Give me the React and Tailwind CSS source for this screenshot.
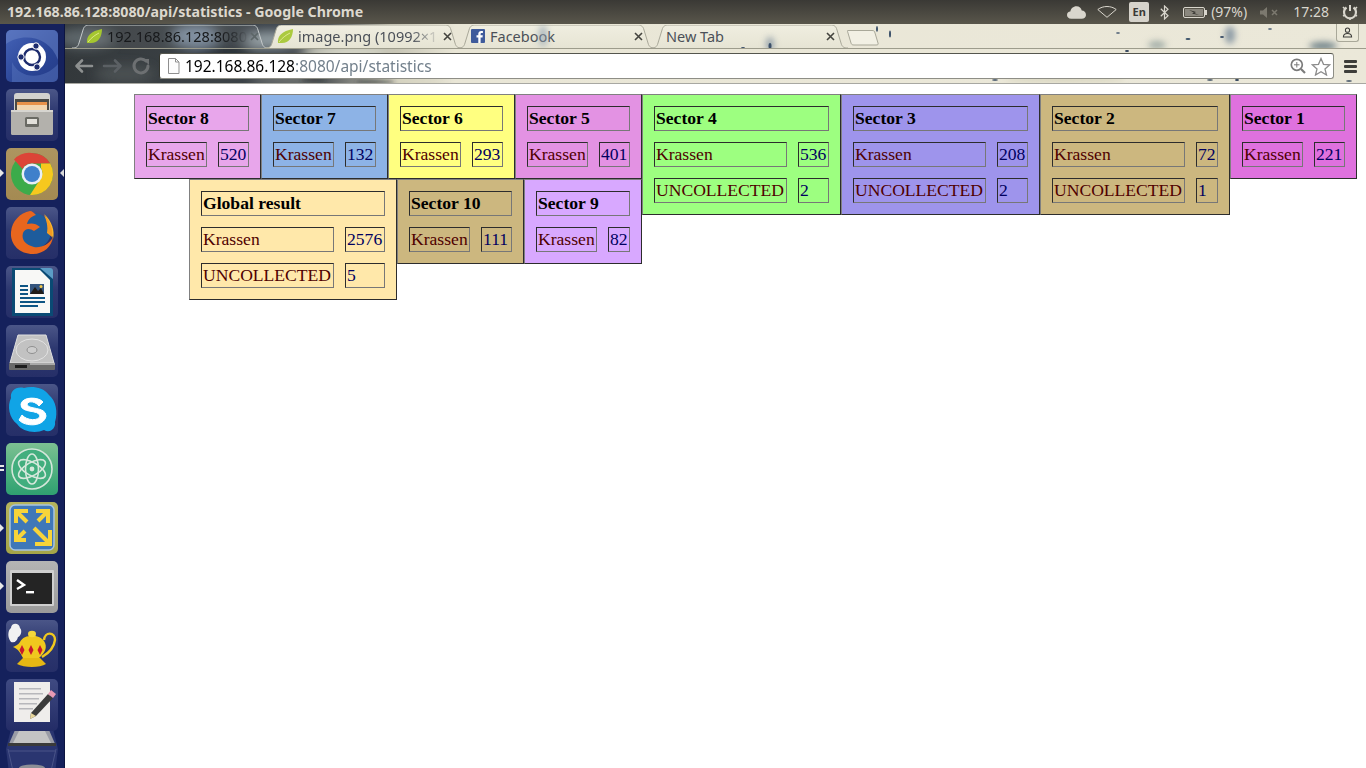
import React from "react";

const ui = { fontFamily: '"Noto Sans", "Open Sans", sans-serif' };

const tables = [
  { t: "Sector 1", bg: "bg-[#df71de]", num: "w-[31px]", name: "w-[61px]", rows: [["Krassen", "221"]] },
  { t: "Sector 2", bg: "bg-[#ccb77f]", num: "w-[22px]", name: "w-[133px]", rows: [["Krassen", "72"], ["UNCOLLECTED", "1"]] },
  { t: "Sector 3", bg: "bg-[#9e94ec]", num: "w-[31px]", name: "w-[133px]", rows: [["Krassen", "208"], ["UNCOLLECTED", "2"]] },
  { t: "Sector 4", bg: "bg-[#9dff80]", num: "w-[31px]", name: "w-[133px]", rows: [["Krassen", "536"], ["UNCOLLECTED", "2"]] },
  { t: "Sector 5", bg: "bg-[#e392e3]", num: "w-[31px]", name: "w-[61px]", rows: [["Krassen", "401"]] },
  { t: "Sector 6", bg: "bg-[#ffff80]", num: "w-[31px]", name: "w-[61px]", rows: [["Krassen", "293"]] },
  { t: "Sector 7", bg: "bg-[#8db3e6]", num: "w-[31px]", name: "w-[61px]", rows: [["Krassen", "132"]] },
  { t: "Sector 8", bg: "bg-[#e8a6eb]", num: "w-[31px]", name: "w-[61px]", rows: [["Krassen", "520"]] },
  { t: "Sector 9", bg: "bg-[#d8a8ff]", num: "w-[22px]", name: "w-[61px]", rows: [["Krassen", "82"]] },
  { t: "Sector 10", bg: "bg-[#ccb77f]", num: "w-[31px]", name: "w-[61px]", rows: [["Krassen", "111"]] },
  { t: "Global result", bg: "bg-[#ffe8aa]", num: "w-[40px]", name: "w-[133px]", rows: [["Krassen", "2576"], ["UNCOLLECTED", "5"]] },
];

const cell =
  "h-[25px] border border-solid border-t-[#2c2c2c] border-l-[#2c2c2c] border-b-[#777777] border-r-[#777777] p-[1px] align-middle leading-[21px] whitespace-nowrap";

function Stat({ d }) {
  return (
    <table
      className={`float-right border-separate border-spacing-[11px] border border-solid border-t-[#808080] border-l-[#808080] border-b-[#2c2c2c] border-r-[#2c2c2c] text-[17.6px] ${d.bg}`}
      style={{ fontFamily: '"Liberation Serif", serif' }}
    >
      <tbody>
        <tr>
          <th colSpan={2} className={`${cell} text-left font-bold text-black`}>{d.t}</th>
        </tr>
        {d.rows.map(([a, b]) => (
          <tr key={a}>
            <td className={`${cell} ${d.name} text-[#4f0000]`}>{a}</td>
            <td className={`${cell} ${d.num} text-[#00005f]`}>{b}</td>
          </tr>
        ))}
      </tbody>
    </table>
  );
}

const Tile = ({ bg, children }) => (
  <div className={`relative h-[52px] w-[52px] shrink-0 overflow-hidden rounded-[5px] ${bg}`}>
    <svg viewBox="0 0 52 52" className="absolute inset-0 h-full w-full">{children}</svg>
  </div>
);

const navy = "bg-[linear-gradient(180deg,#4b5688_0%,#2d3870_45%,#262f68_100%)]";

const Pip = ({ y }) => (
  <div className={`absolute left-0 h-0 w-0 border-y-[4px] border-l-[4px] border-y-transparent border-l-[#e8e8e8] ${y}`} />
);

function Launcher() {
  return (
    <div className="relative flex w-[65px] shrink-0 flex-col gap-[7px] overflow-hidden border-r border-[#0c1440] bg-[#15215c] px-[6px] pt-[6px]">
      <Tile bg="bg-[linear-gradient(135deg,#4664b8,#2a4596_60%,#263c88)]">
        <path d="M0 14 C16 2 44 6 52 30 L52 0 L0 0Z" fill="#6c86c8" opacity=".5" />
        <path d="M6 32 C14 50 38 50 52 34 L52 52 L6 52Z" fill="#5d7bc2" opacity=".45" />
        <circle cx="26" cy="27" r="14" fill="#fff" />
        <circle cx="26" cy="27" r="8" fill="none" stroke="#1d2c6e" strokeWidth="2.400" />
        <circle cx="30" cy="16" r="3.200" fill="#1d2c6e" stroke="#fff" strokeWidth="1" />
        <circle cx="15" cy="27" r="3.200" fill="#1d2c6e" stroke="#fff" strokeWidth="1" />
        <circle cx="31" cy="37" r="3.200" fill="#1d2c6e" stroke="#fff" strokeWidth="1" />
      </Tile>
      <Tile bg={navy}>
        <path d="M8 7 Q8 4 11 4 H41 Q44 4 44 7 V22 H8Z" fill="#d3d2ce" />
        <rect x="9" y="10" width="34" height="13" fill="#4a4a46" />
        <rect x="11" y="13" width="30" height="3" fill="#e8924a" />
        <rect x="11" y="16" width="30" height="7" fill="#f2d6b0" />
        <rect x="5" y="21" width="42" height="25" rx="1.500" fill="#b3b1ac" />
        <rect x="5" y="21" width="42" height="2" fill="#d7d5d0" />
        <rect x="19" y="28" width="14" height="10" rx="1.500" fill="#6a6a64" />
        <rect x="21" y="30" width="10" height="5" fill="#e2e0da" />
      </Tile>
      <Tile bg="bg-[linear-gradient(180deg,#ad9560,#a48a52)]">
        <circle cx="26" cy="26" r="21" fill="#3cab4a" />
        <path d="M26 5 A21 21 0 0 1 44.200 15.500 L26 15.500 A10.500 10.500 0 0 0 16.500 21 L8 11.500 A21 21 0 0 1 26 5Z" fill="#dc4437" />
        <path d="M44.200 15.500 A21 21 0 0 1 24 47 L35 30 A10.500 10.500 0 0 0 35 20 L35 15.500Z" fill="#f6c81e" />
        <circle cx="26" cy="26" r="10.500" fill="#e9eef6" />
        <circle cx="26" cy="26" r="8" fill="#3f80cb" />
      </Tile>
      <Tile bg={navy}>
        <circle cx="27" cy="24" r="18" fill="#1e5c9c" />
        <path d="M38 7 C46 14 49 24 47 32 C45 24 43 15 38 7Z" fill="#f7b52b" />
        <path d="M38 8 C44 14 47 22 46 30 L41 26 C42 20 41 14 38 8Z" fill="#f39a22" />
        <path d="M24 4 C14 6 6 14 5 25 C4 38 14 47 27 47 C38 47 46 39 47 30 C43 38 35 41 28 40 C20 38 15 33 17 26 C19 21 24 21 28 24 L34 20 C30 16 25 16 21 17 C22 12 26 9 30 8 C28 6 26 4 24 4Z" fill="#e8661e" />
      </Tile>
      <Tile bg={navy}>
        <path d="M6 2 H36 L47 13 V50 H6Z" fill="#0a4a74" />
        <path d="M9 4 H34 L44 14 V47 H9Z" fill="#f8f8f6" />
        <path d="M34 2 H44 Q47 2 47 5 V13Z" fill="#5b9cc6" />
        <rect x="14" y="19" width="8" height="2" fill="#0e5584" />
        <rect x="14" y="23" width="8" height="2" fill="#0e5584" />
        <rect x="14" y="27" width="8" height="2" fill="#0e5584" />
        <rect x="24" y="18" width="14" height="10" fill="#34557e" />
        <path d="M24 28 L29 21 L32 25 L35 22 L38 28Z" fill="#201c18" />
        <circle cx="35" cy="20.500" r="1.500" fill="#f3c84a" />
        <rect x="14" y="31" width="25" height="2" fill="#0e5584" />
        <rect x="14" y="35" width="25" height="2" fill="#0e5584" />
        <rect x="14" y="39" width="18" height="2" fill="#0e5584" />
      </Tile>
      <Tile bg={navy}>
        <path d="M12 10 H40 L48 38 H4Z" fill="#c2c2c2" />
        <path d="M12 10 H40 L48 38 H4Z" fill="none" stroke="#e0e0e0" />
        <ellipse cx="26" cy="25" rx="16" ry="11" fill="none" stroke="#e2e2e2" />
        <ellipse cx="26" cy="25" rx="5" ry="3.500" fill="#cdcdcd" stroke="#909090" />
        <rect x="3" y="38" width="46" height="7" rx="1" fill="#6a6a6a" />
        <rect x="9" y="40" width="12" height="3" fill="#1d1d1d" />
        <rect x="24" y="38" width="25" height="2" fill="#a8a8a8" />
      </Tile>
      <Tile bg={navy}>
        <path d="M18 4 C10 2 4 7 5 14 C1 22 3 34 11 40 C16 48 30 50 38 46 C44 50 50 44 49 38 C52 28 50 17 43 11 C37 3 26 2 18 4Z" fill="#10a4e6" />
        <path d="M37 18 C33 13 17 12 15 20 C14 30 33 25 34 32 C33 37 21 37 16 31 L13 36 C19 43 38 43 40 32 C40 22 21 26 21 20 C23 16 30 18 33 22Z" fill="#fff" stroke="#fff" strokeWidth="1" />
      </Tile>
      <Tile bg="bg-[linear-gradient(180deg,#7cc092,#43ab7a_70%,#2fa070)]">
        <circle cx="26" cy="26" r="20" fill="#42ae7e" stroke="#d4e6da" strokeWidth="1.600" />
        <g fill="none" stroke="#d6e8dc" strokeWidth="1.600">
          <ellipse cx="26" cy="26" rx="15" ry="6.500" transform="rotate(30 26 26)" />
          <ellipse cx="26" cy="26" rx="15" ry="6.500" transform="rotate(-30 26 26)" />
          <ellipse cx="26" cy="26" rx="15" ry="6.500" transform="rotate(90 26 26)" />
        </g>
        <circle cx="26" cy="26" r="2.400" fill="#d6e8dc" />
      </Tile>
      <Tile bg="bg-[linear-gradient(180deg,#b5b35c,#a5a548)]">
        <rect x="4" y="3" width="44" height="45" rx="5" fill="#3f78b8" stroke="#a8c4e0" strokeWidth="1.500" />
        <g fill="none" stroke="#f7d43a" strokeWidth="4">
          <path d="M10 21 V9 H22" />
          <path d="M10 9 L21 20" />
          <path d="M42 21 V9 H30" />
          <path d="M42 9 L32 19" />
          <path d="M10 28 V38 H20" />
          <path d="M10 38 L19 29" />
          <path d="M29 42 H44 V28" />
          <path d="M44 42 L28 26" />
        </g>
      </Tile>
      <Tile bg="bg-[linear-gradient(180deg,#b4b4b4,#9a9a9a)]">
        <rect x="4" y="9" width="44" height="36" rx="1" fill="#cfcfcf" />
        <rect x="6" y="12" width="40" height="31" fill="#242424" />
        <path d="M11 19 L18 24 L11 28" fill="none" stroke="#fff" strokeWidth="2.400" />
        <rect x="20" y="30" width="8" height="2.400" fill="#fff" />
      </Tile>
      <Tile bg={navy}>
        <path d="M5 22 C1 17 2 10 5 8 C5 3 13 2 14 8 C17 11 14 17 12 17 C11 21 9 23 5 22Z" fill="#f2f2f2" />
        <path d="M38 20 C39 11 49 12 49 20 C48 28 43 33 36 37" fill="none" stroke="#f0c81e" strokeWidth="2.400" />
        <path d="M7 27 C12 29 14 32 17 38 L33 38 C39 33 42 27 38 21 C33 14 18 14 14 22 C12 25 9 26 7 27Z" fill="#f0c81e" />
        <ellipse cx="26" cy="14" rx="4" ry="3.200" fill="#f5d73a" />
        <path d="M17 38 H34 L40 44 C34 48 18 48 11 44Z" fill="#e6b714" />
        <path d="M16 25 l2.500 5 -2.500 5 -2.500 -5Z M25 25 l2.500 5 -2.500 5 -2.500 -5Z M34 25 l2.500 5 -2.500 5 -2.500 -5Z" fill="#c9192b" />
      </Tile>
      <Tile bg="bg-[linear-gradient(180deg,#3f4a82,#232c66)]">
        <rect x="8" y="3" width="36" height="40" fill="#efedeb" />
        <g fill="#b7b7bb">
          <rect x="13" y="9" width="22" height="1.500" />
          <rect x="13" y="14" width="24" height="1.500" />
          <rect x="13" y="19" width="20" height="1.500" />
          <rect x="13" y="24" width="18" height="1.500" />
          <rect x="13" y="29" width="14" height="1.500" />
        </g>
        <path d="M25 34 L42 15 L47 19 L30 37 L24 40Z" fill="#3b3b3b" />
        <path d="M42 15 L45 11 L50 15 L47 19Z" fill="#e89ab4" />
        <path d="M25 34 L24 40 L30 37Z" fill="#e6d49a" />
      </Tile>
      <div className="-mt-[9px] h-[44px] w-[52px] shrink-0">
        <svg viewBox="0 0 52 44" className="h-full w-full">
          <path d="M0 20 L5 0 H47 L52 20 L49 44 H3Z" fill="#2a3570" />
          <path d="M9 1 H43 L50 17 H2Z" fill="#9a9ca6" />
          <path d="M13 2 H39 L45 14 H7Z" fill="#c4c4c4" />
          <rect x="2" y="14" width="48" height="3" fill="#3a3a3a" />
          <path d="M3 22 H49 M2 20 L7 42 M50 20 L45 42" stroke="#4a5488" fill="none" />
          <ellipse cx="26" cy="39" rx="13" ry="3.500" fill="#8c8e96" />
        </svg>
      </div>
      <Pip y="top-[145px]" />
      <Pip y="top-[500px]" />
      <Pip y="top-[558px]" />
      <div className="absolute left-0 top-[441px] h-[2px] w-[4px] bg-[#e8e8e8]" />
      <div className="absolute left-0 top-[445px] h-[2px] w-[4px] bg-[#e8e8e8]" />
      <div className="absolute right-0 top-[145px] h-0 w-0 border-y-[4px] border-r-[4px] border-y-transparent border-r-[#d8d8d8]" />
    </div>
  );
}

const Leaf = ({ dim }) => (
  <svg viewBox="0 0 17 15" className={`h-[15px] w-[17px] shrink-0 ${dim ? "opacity-90" : ""}`}>
    <path d="M1 14 C0 7 5 2 16 0 C16 8 12 14 5 14 C3 14 2 14 1 14Z" fill="#a5c72f" />
    <path d="M2 13 C5 9 9 6 13 4" stroke="#dfe88a" strokeWidth="1" fill="none" />
  </svg>
);

function TabShape({ active }) {
  const d = "M0 23 C4 23 6 22 7 18 L11 5 C12 1 14 0 18 0 H179 C183 0 185 1 186 5 L190 18 C191 22 193 23 197 23";
  return (
    <svg viewBox="0 0 197 25" className="absolute inset-0 h-[25px] w-[197px]">
      <defs>
        <linearGradient id="tabfill" x1="0" y1="0" x2="0" y2="1">
          <stop offset="0" stopColor="#f0eee0" />
          <stop offset="1" stopColor="#e6e4d4" />
        </linearGradient>
      </defs>
      <path d={d} fill={active ? "#ffffff" : "url(#tabfill)"} fillOpacity={active ? 0.07 : 1} stroke={active ? "#c6cbcc" : "#a9a899"} strokeWidth="1" />
    </svg>
  );
}

function Tab({ icon, title, active, fade, gapClass, textClass, closeClass }) {
  return (
    <div className="relative -ml-[4px] h-[25px] w-[197px] shrink-0 first:ml-0">
      <TabShape active={active} />
      <div className={`relative flex h-[25px] items-center pb-[3px] ${gapClass}`}>
        {icon}
        <span
          className={`w-[142px] overflow-hidden whitespace-nowrap text-[14.5px] leading-[22px] ${textClass} ${fade ? "[mask-image:linear-gradient(90deg,#000_80%,transparent_100%)]" : ""}`}
          style={ui}
        >
          {title}
        </span>
      </div>
      <svg viewBox="0 0 9 9" className={`absolute top-[7px] h-[9px] w-[9px] ${closeClass}`}>
        <path d="M1 1 L8 8 M8 1 L1 8" stroke={active ? "#5d6668" : "#44443f"} strokeWidth="1.600" />
      </svg>
    </div>
  );
}

function Theme() {
  return (
    <svg viewBox="0 0 1301 60" preserveAspectRatio="none" className="absolute inset-0 h-full w-full">
      <defs>
        <filter id="b6"><feGaussianBlur stdDeviation="6" /></filter>
        <filter id="b2"><feGaussianBlur stdDeviation="2" /></filter>
        <filter id="b1"><feGaussianBlur stdDeviation=".6" /></filter>
      </defs>
      <g filter="url(#b6)">
        <ellipse cx="20" cy="14" rx="30" ry="10" fill="#5f676c" />
        <ellipse cx="60" cy="50" rx="30" ry="9" fill="#4c5153" />
        <ellipse cx="130" cy="12" rx="24" ry="12" fill="#78889a" />
        <ellipse cx="160" cy="30" rx="34" ry="9" fill="#2a3038" />
        <ellipse cx="205" cy="16" rx="26" ry="9" fill="#939ea3" />
        <ellipse cx="280" cy="28" rx="44" ry="9" fill="#dcdccc" />
        <ellipse cx="340" cy="56" rx="34" ry="5" fill="#dedbc8" />
        <ellipse cx="220" cy="56" rx="36" ry="4" fill="#8b8d86" />
      </g>
      <g filter="url(#b2)">
        <ellipse cx="248" cy="56" rx="12" ry="1.500" fill="#2a2e30" />
        <ellipse cx="310" cy="58" rx="20" ry="1.500" fill="#2c3034" />
        <ellipse cx="1000" cy="56" rx="60" ry="2" fill="#d6d3bc" />
      </g>
      <g filter="url(#b1)" fill="#2c3f58">
        <ellipse cx="1062" cy="27" rx="2" ry="1" />
        <ellipse cx="1172" cy="56" rx="2" ry="1" />
        <ellipse cx="1145" cy="56" rx="3" ry=".7" />
        <ellipse cx="930" cy="56" rx="3" ry=".7" />
        <ellipse cx="1284" cy="57" rx="3" ry=".8" />
      </g>
    </svg>
  );
}

function ThemeMarks() {
  return (
    <svg viewBox="0 0 1301 25" className="pointer-events-none absolute left-0 top-0 h-[25px] w-[1301px]">
      <defs>
        <filter id="m3"><feGaussianBlur stdDeviation="3" /></filter>
        <filter id="m1"><feGaussianBlur stdDeviation=".7" /></filter>
      </defs>
      <g filter="url(#m3)">
        <ellipse cx="478" cy="12" rx="4" ry="11" fill="#8ea0ae" opacity=".7" />
        <ellipse cx="705" cy="20" rx="4" ry="7" fill="#7f90a0" opacity=".8" />
        <ellipse cx="1165" cy="11" rx="5" ry="9" fill="#8b9aa4" />
        <ellipse cx="1092" cy="21" rx="9" ry="4" fill="#a0aca6" />
        <ellipse cx="1258" cy="22" rx="14" ry="4" fill="#6f8288" />
      </g>
      <g filter="url(#m1)" fill="#3a4f68">
        <ellipse cx="812" cy="5" rx="1" ry="3" />
        <ellipse cx="825" cy="10" rx="1" ry="3.500" />
        <ellipse cx="705" cy="22" rx="1.500" ry="3" />
        <ellipse cx="678" cy="24" rx="2" ry="1" />
        <ellipse cx="1053" cy="9" rx="2" ry=".8" />
        <ellipse cx="1123" cy="15" rx="2.500" ry=".9" />
        <ellipse cx="1157" cy="13" rx="2" ry="1" />
        <ellipse cx="1205" cy="5" rx="2" ry=".8" />
      </g>
    </svg>
  );
}

function Header() {
  return (
    <div className="relative h-[60px] shrink-0 overflow-hidden bg-[linear-gradient(90deg,#33383b_0%,#3c4246_12%,#394048_16%,#54585a_20%,#c4c2b2_25%,#e9e6d6_30%,#ebe8d9_100%)]">
      <Theme />
      <div className="relative flex h-[24px] pl-[7px] pt-[1px]">
        <Tab
          active
          fade
          icon={<Leaf />}
          title="192.168.86.128:8080"
          gapClass="gap-[4px] pl-[14px]"
          textClass="text-[#17191b]"
          closeClass="left-[178px]"
        />
        <Tab
          fade
          icon={<Leaf dim />}
          title="image.png (10992×1"
          gapClass="gap-[4px] pl-[12px]"
          textClass="text-[#4b5058]"
          closeClass="left-[178px]"
        />
        <Tab
          icon={
            <svg viewBox="0 0 14 14" className="h-[14px] w-[14px] shrink-0">
              <rect width="14" height="14" rx="1" fill="#3f5b9b" />
              <path d="M9.600 14 V8.500 H11.500 L11.800 6.300 H9.600 V5 C9.600 4.300 9.800 3.900 10.700 3.900 H11.900 V2 C11.600 2 11 1.900 10.200 1.900 C8.500 1.900 7.300 2.900 7.300 4.800 V6.300 H5.500 V8.500 H7.300 V14Z" fill="#fff" />
            </svg>
          }
          title="Facebook"
          gapClass="gap-[5px] pl-[13px]"
          textClass="text-[#4b5058]"
          closeClass="left-[176px]"
        />
        <Tab title="New Tab" gapClass="pl-[15px]" textClass="text-[#4b5058]" closeClass="left-[175px]" />
        <svg viewBox="0 0 34 17" className="-ml-[1px] mt-[4px] h-[17px] w-[34px]">
          <path d="M1 1.500 H25 C27 1.500 27.500 2 28 4 L31 14 C31.500 15.500 31 16 29 16 H7 C5 16 4.500 15.500 4 14 L1 4 C.5 2 0 1.500 1 1.500Z" fill="#f2f0e4" stroke="#a9a899" />
        </svg>
        <ThemeMarks />
        <div className="relative ml-auto mr-[7px] -mt-[1px] flex h-[18px] w-[23px] items-center justify-center rounded-b-[3px] border border-t-0 border-[#a9a899] bg-[#ece9da]/50">
          <svg viewBox="0 0 12 12" className="h-[11px] w-[11px]">
            <circle cx="6" cy="3.500" r="2.300" fill="none" stroke="#3d3d3a" strokeWidth="1.100" />
            <path d="M1.500 11 C1.500 7.500 4 7 6 7 C8 7 10.500 7.500 10.500 11Z" fill="none" stroke="#3d3d3a" strokeWidth="1.100" />
          </svg>
        </div>
      </div>
      <div className="relative flex h-[36px] items-center border-t border-b border-t-[#9d9c8c] border-b-[#a8a8a2] pl-[9px] pr-[9px]">
        <svg viewBox="0 0 86 20" className="h-[20px] w-[86px] shrink-0">
          <g fill="none" strokeWidth="2.600" strokeLinecap="round" strokeLinejoin="round" stroke="#8d9090">
            <path d="M18 10 H3 M8 4.500 L2.500 10 L8 15.500" />
            <path d="M30 10 H46 M41 4.500 L46.500 10 L41 15.500" stroke="#5b6064" />
            <path d="M72 5 A7 7 0 1 0 74 10" stroke="#6d7072" strokeWidth="3" />
            <path d="M69 3 L75 3 L75 9Z" fill="#6d7072" stroke="none" />
          </g>
        </svg>
        <div className="-ml-[1px] flex h-[26px] flex-1 items-center rounded-[3px] border border-[#8e8e86] border-l-[#33352f] border-t-[#55564e] bg-white pl-[7px] pr-[2px]">
          <svg viewBox="0 0 13 16" className="mr-[5px] h-[16px] w-[13px] shrink-0">
            <path d="M1.500 .5 H8.500 L12 4 V15.500 H1.500Z M8.500 .5 V4 H12" fill="#fcfcfc" stroke="#8f8f8f" />
          </svg>
          <span className="flex-1 whitespace-nowrap text-[15.5px] leading-[24px]" style={ui}>
            <span className="text-black">192.168.86.128</span>
            <span className="text-[#73808c]">:8080/api/statistics</span>
          </span>
          <svg viewBox="0 0 16 16" className="mr-[5px] h-[16px] w-[16px]">
            <circle cx="6.800" cy="6.800" r="5.500" fill="none" stroke="#7b7b7b" strokeWidth="1.700" />
            <path d="M4 6.800 H9.500 M6.800 4 V9.500" stroke="#7b7b7b" strokeWidth="1" />
            <path d="M11 11 L15 15" stroke="#7b7b7b" strokeWidth="2.200" />
          </svg>
          <svg viewBox="0 0 20 19" className="h-[19px] w-[20px]">
            <path d="M10 1.500 L12.500 7.300 L18.800 7.800 L14 12 L15.500 18 L10 14.800 L4.500 18 L6 12 L1.200 7.800 L7.500 7.300Z" fill="#fff" stroke="#8c8c8c" strokeWidth="1.300" />
          </svg>
        </div>
        <div className="ml-[10px] flex w-[13px] shrink-0 flex-col gap-[2px]">
          <div className="h-[3px] rounded-[1px] bg-[#3e3e3a]" />
          <div className="h-[3px] rounded-[1px] bg-[#3e3e3a]" />
          <div className="h-[3px] rounded-[1px] bg-[#3e3e3a]" />
        </div>
      </div>
    </div>
  );
}

function TopBar() {
  return (
    <div className="flex h-[24px] shrink-0 items-center bg-[linear-gradient(180deg,#3a3935,#59564b)] pl-[7px] pr-[8px]" style={ui}>
      <span className="text-[14.2px] font-bold leading-[24px] text-[#dcd8ce]">192.168.86.128:8080/api/statistics - Google Chrome</span>
      <div className="ml-auto flex items-center">
        <svg viewBox="0 0 20 13" className="mr-[11px] h-[13px] w-[19px]">
          <path d="M4.500 13 C1.500 13 0 11 0 9 C0 7 1.500 5.500 3.500 5.500 C4 2.500 6.500 0 10 0 C13 0 15 2 15.500 4.500 C18 4.500 20 6.500 20 9 C20 11.500 18 13 15.500 13Z" fill="#d9d6cd" />
        </svg>
        <svg viewBox="0 0 20 12" className="mr-[12px] h-[12px] w-[20px]">
          <path d="M.8 3.500 C6 -.5 14 -.5 19.200 3.500 L10 11.300Z" fill="none" stroke="#d9d6cd" strokeWidth="1" />
        </svg>
        <div className="mr-[11px] flex h-[20px] w-[20px] items-center justify-center rounded-[2px] bg-[#d6d3cb] text-[11px] font-bold text-[#3a3935]">En</div>
        <svg viewBox="0 0 9 15" className="mr-[14px] h-[15px] w-[9px]">
          <path d="M.8 3.800 L8 10.800 L4.500 14 V1 L8 4.200 L.8 11.200" fill="none" stroke="#d9d6cd" strokeWidth="1.200" />
        </svg>
        <svg viewBox="0 0 24 11" className="mr-[4px] h-[11px] w-[24px]">
          <rect x=".5" y=".5" width="21" height="10" rx="1.500" fill="#57544a" stroke="#d9d6cd" />
          <rect x="22" y="3" width="2" height="5" fill="#d9d6cd" />
          <rect x="2" y="2" width="18" height="7" fill="#8a877e" />
          <path d="M6 3 L13 5 L11 6 L16 8 L9 6.500 L11 5.500Z" fill="#2c2b27" />
        </svg>
        <span className="mr-[13px] text-[14px] leading-[24px] text-[#d9d6cd]">(97%)</span>
        <svg viewBox="0 0 18 11" className="mr-[15px] h-[11px] w-[18px]">
          <path d="M0 3.500 H3 L7 0 V11 L3 7.500 H0Z" fill="#7c796f" />
          <path d="M12 3 L17 8 M17 3 L12 8" stroke="#7c796f" strokeWidth="1.500" />
        </svg>
        <span className="mr-[13px] text-[14px] leading-[24px] text-[#d9d6cd]">17:28</span>
        <svg viewBox="0 0 16 16" className="h-[16px] w-[16px]">
          <path d="M8 1 V7" stroke="#d9d6cd" strokeWidth="2" />
          <path d="M4.500 3.500 A6 6 0 1 0 11.500 3.500" fill="none" stroke="#d9d6cd" strokeWidth="2.200" />
          <path d="M1 3 L3 5 M15 3 L13 5 M1 12 L3 11 M15 12 L13 11 M8 14 V16" stroke="#d9d6cd" strokeWidth="1.600" />
        </svg>
      </div>
    </div>
  );
}

export default function App() {
  return (
    <div className="flex h-screen w-full flex-col overflow-hidden bg-white">
      <TopBar />
      <div className="flex min-h-0 flex-1">
        <Launcher />
        <div className="flex min-w-0 flex-1 flex-col">
          <Header />
          <div className="min-h-0 flex-1 bg-white pr-[9px] pt-[10px]">
            {tables.map((d) => (
              <Stat key={d.t} d={d} />
            ))}
          </div>
        </div>
      </div>
    </div>
  );
}
